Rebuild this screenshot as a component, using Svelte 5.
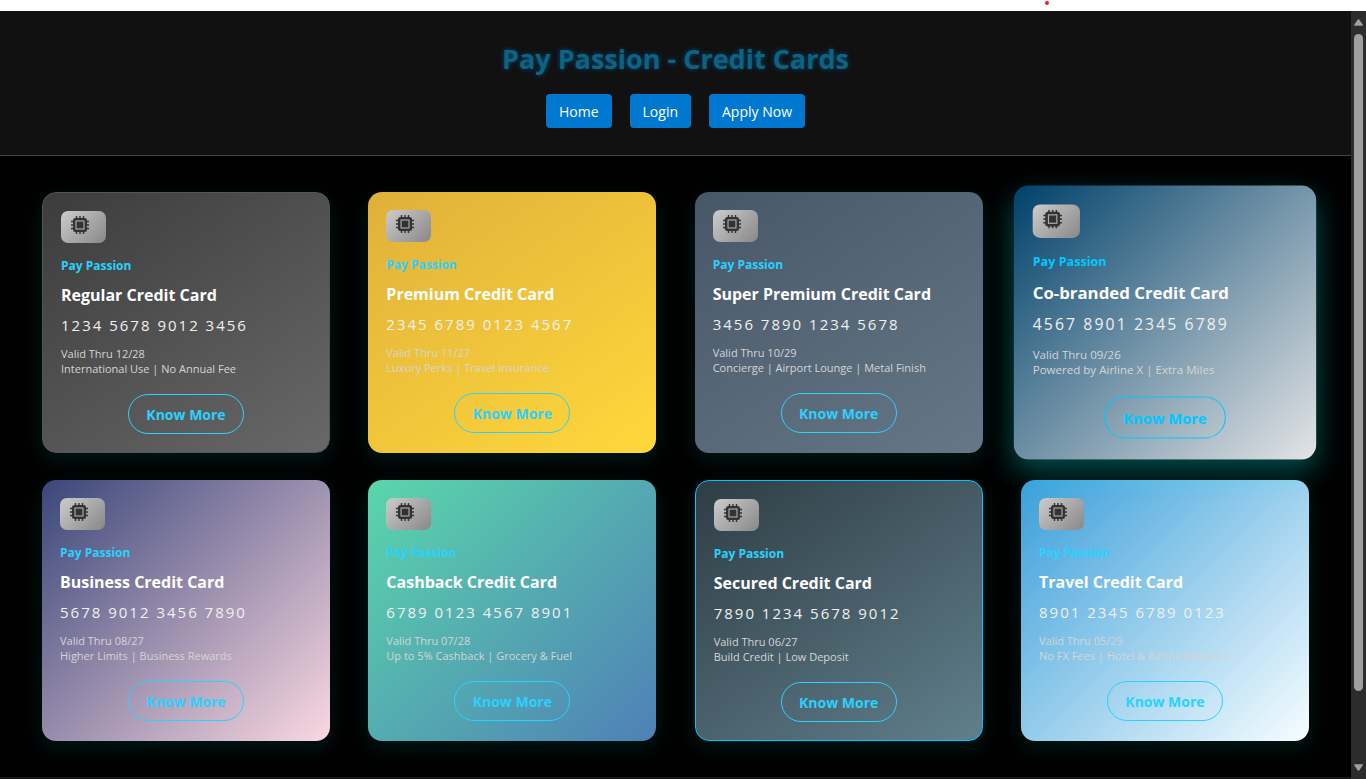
<script>
  const links = ['Home', 'Login', 'Apply Now'];

  const cards = [
    { kind: 'regular', name: 'Regular Credit Card', number: '1234 5678 9012 3456', valid: '12/28', perks: 'International Use | No Annual Fee' },
    { kind: 'premium', name: 'Premium Credit Card', number: '2345 6789 0123 4567', valid: '11/27', perks: 'Luxury Perks | Travel Insurance' },
    { kind: 'super-premium', name: 'Super Premium Credit Card', number: '3456 7890 1234 5678', valid: '10/29', perks: 'Concierge | Airport Lounge | Metal Finish' },
    { kind: 'cobranded', name: 'Co-branded Credit Card', number: '4567 8901 2345 6789', valid: '09/26', perks: 'Powered by Airline X | Extra Miles' },
    { kind: 'business', name: 'Business Credit Card', number: '5678 9012 3456 7890', valid: '08/27', perks: 'Higher Limits | Business Rewards' },
    { kind: 'cashback', name: 'Cashback Credit Card', number: '6789 0123 4567 8901', valid: '07/28', perks: 'Up to 5% Cashback | Grocery & Fuel' },
    { kind: 'secured', name: 'Secured Credit Card', number: '7890 1234 5678 9012', valid: '06/27', perks: 'Build Credit | Low Deposit' },
    { kind: 'travel', name: 'Travel Credit Card', number: '8901 2345 6789 0123', valid: '05/29', perks: 'No FX Fees | Hotel & Airline Rewards' }
  ];
</script>

<div class="window">
  <div class="strip"><span class="dot"></span></div>
  <div class="view">
    <div class="page">
      <header>
        <h1>Pay Passion - Credit Cards</h1>
        <nav>
          {#each links as link}
            <a href="#top">{link}</a>
          {/each}
        </nav>
      </header>
      <main>
        {#each cards as card}
          <article class="card {card.kind}">
            <div class="chip">
              <svg viewBox="0 0 18 18" width="18" height="18" aria-hidden="true">
                <path d="M5.5 0v18M9 0v18M12.5 0v18M0 5.5h18M0 9h18M0 12.5h18" stroke="#333" stroke-width="1.4" />
                <rect x="2" y="2" width="14" height="14" rx="2.5" fill="#333" />
                <rect x="5" y="5" width="8" height="8" fill="#333" stroke="#b0b0b0" stroke-width="1.1" />
              </svg>
            </div>
            <div class="brand">Pay Passion</div>
            <h2>{card.name}</h2>
            <div class="number">{card.number}</div>
            <p>Valid Thru {card.valid}<br />{card.perks}</p>
            <button type="button">Know More</button>
          </article>
        {/each}
      </main>
      <footer></footer>
    </div>
    <div class="scrollbar" aria-hidden="true">
      <svg viewBox="0 0 9 7" width="9" height="7"><path d="M4.5 1 8 6H1Z" fill="#9f9f9f" stroke="#9f9f9f" stroke-width="1.6" stroke-linejoin="round" /></svg>
      <div class="track"><div class="thumb"></div></div>
      <svg viewBox="0 0 9 7" width="9" height="7"><path d="M4.5 6 8 1H1Z" fill="#9f9f9f" stroke="#9f9f9f" stroke-width="1.6" stroke-linejoin="round" /></svg>
    </div>
  </div>
</div>

<style>
  :global(body) {
    margin: 0;
    background: #000;
  }
  * {
    box-sizing: border-box;
  }
  .window {
    display: flex;
    flex-direction: column;
    height: 100vh;
    font-family: 'Open Sans', 'Noto Sans', sans-serif;
    color: #fff;
  }
  .strip {
    position: relative;
    flex: none;
    height: 11px;
    background: #fff;
  }
  .dot {
    position: absolute;
    top: 1px;
    left: calc(76% + 7px);
    width: 4px;
    height: 4px;
    border-radius: 50%;
    background: #ed1c24;
  }
  .view {
    display: flex;
    flex: 1;
    min-height: 0;
  }
  .page {
    flex: 1;
    min-width: 0;
    overflow: hidden;
    background: #000;
  }
  header {
    display: flex;
    flex-direction: column;
    align-items: center;
    gap: 16px;
    padding: 28px 18px 27px;
    background: #111;
    border-bottom: 1px solid #444;
  }
  h1 {
    margin: 0;
    font-size: 27px;
    line-height: 39px;
    font-weight: 700;
    color: #0c6480;
    text-shadow: 0 0 5px #00497c;
  }
  nav {
    display: flex;
    gap: 18px;
  }
  nav a {
    padding: 1px 13px 0;
    border-radius: 4px;
    background: #0078d0;
    color: #fff;
    font-size: 14px;
    line-height: 33px;
    text-decoration: none;
  }
  main {
    display: grid;
    grid-template-columns: repeat(auto-fill, 288px);
    justify-content: space-between;
    gap: 27px;
    padding: 36px 42px;
  }
  .card {
    display: flex;
    flex-direction: column;
    align-items: flex-start;
    padding: 18px;
    border-radius: 14px;
    box-shadow: 0 7px 22px rgba(0, 255, 240, 0.1);
  }
  .chip {
    width: 45px;
    height: 32px;
    margin-bottom: 14px;
    padding: 5px 10px;
    border-radius: 7px;
    background: linear-gradient(135deg, #ccc, #888);
  }
  .chip svg {
    display: block;
  }
  .brand {
    margin-bottom: 8px;
    font-size: 12px;
    line-height: 18px;
    font-weight: 700;
    color: #2bd1ff;
  }
  h2 {
    margin: 0 0 7px;
    font-size: 16px;
    line-height: 24px;
    font-weight: 700;
  }
  .number {
    margin-bottom: 10px;
    font-size: 15px;
    line-height: 22px;
    letter-spacing: 2px;
    color: #f0f0f0;
  }
  p {
    margin: 0 0 18px;
    font-size: 11px;
    line-height: 15px;
    color: #d5d5d5;
  }
  button {
    align-self: center;
    height: 40px;
    min-width: 116px;
    padding: 0 16px;
    border: 1px solid #2bd1ff;
    border-radius: 20px;
    background: transparent;
    color: #2bd1ff;
    font: 700 14px 'Open Sans', 'Noto Sans', sans-serif;
  }
  .regular {
    border: 1px solid #555;
    background: linear-gradient(145deg, #3c3c3c, #686868);
  }
  .premium {
    background: linear-gradient(145deg, #dfb03a, #ffd83b);
  }
  .super-premium {
    background: linear-gradient(145deg, #475768, #667788);
  }
  .cobranded {
    position: relative;
    background: linear-gradient(135deg, #00416a, #e4e5e6);
    box-shadow: 0 11px 27px rgba(0, 255, 250, 0.3);
    transform: scale(1.05);
  }
  .cobranded .brand,
  .cobranded button {
    color: #00c8ff;
  }
  .cobranded button {
    border-color: #00c8ff;
  }
  .business {
    background: linear-gradient(135deg, #3a4679, #fbd8e2);
  }
  .cashback {
    background: linear-gradient(135deg, #5ad6ab, #4f80b6);
  }
  .secured {
    border: 1px solid #00c8ff;
    background: linear-gradient(145deg, #2f3d44, #607f8c);
  }
  .travel {
    background: linear-gradient(135deg, #3a9fda, #f7fdff);
  }
  footer {
    height: 60px;
    border-top: 1px solid #1c1c1c;
    background: #111;
  }
  .scrollbar {
    display: flex;
    flex: none;
    flex-direction: column;
    align-items: center;
    gap: 8px;
    width: 15px;
    padding: 8px 0;
    background: #2c2c2c;
  }
  .track {
    flex: 1;
    width: 9px;
  }
  .thumb {
    height: 91%;
    border-radius: 5px;
    background: #9f9f9f;
  }
</style>
